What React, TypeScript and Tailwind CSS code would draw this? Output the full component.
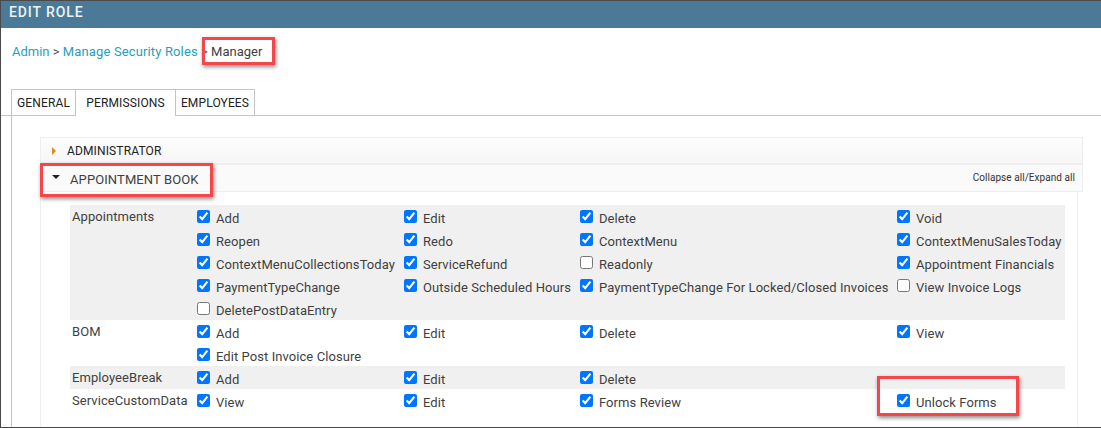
const groups = [
  {
    name: "Appointments",
    shaded: true,
    rows: [
      [["Add", true], ["Edit", true], ["Delete", true], ["Void", true]],
      [["Reopen", true], ["Redo", true], ["ContextMenu", true], ["ContextMenuSalesToday", true]],
      [["ContextMenuCollectionsToday", true], ["ServiceRefund", true], ["Readonly", false], ["Appointment Financials", true]],
      [["PaymentTypeChange", true], ["Outside Scheduled Hours", true], ["PaymentTypeChange For Locked/Closed Invoices", true], ["View Invoice Logs", false]],
      [["DeletePostDataEntry", false]],
    ],
  },
  {
    name: "BOM",
    shaded: false,
    rows: [
      [["Add", true], ["Edit", true], ["Delete", true], ["View", true]],
      [["Edit Post Invoice Closure", true]],
    ],
  },
  {
    name: "EmployeeBreak",
    shaded: true,
    rows: [[["Add", true], ["Edit", true], ["Delete", true]]],
  },
  {
    name: "ServiceCustomData",
    shaded: false,
    rows: [[["View", true], ["Edit", true], ["Forms Review", true], ["Unlock Forms", true]]],
  },
] as { name: string; shaded: boolean; rows: [string, boolean][][] }[];

function Permission({ label, checked }: { label: string; checked: boolean }) {
  return (
    <label className="flex items-center h-[23px] whitespace-nowrap">
      <input type="checkbox" defaultChecked={checked} className="m-0 w-[13px] h-[13px] accent-[#0075ff]" />
      <span className="ml-[6px] translate-y-[2px] tracking-[0.07px]">{label}</span>
    </label>
  );
}

export default function App() {
  return (
    <div className="relative w-[1101px] h-[428px] overflow-hidden bg-white border-l border-t border-b border-[#4a4a4a] font-['Roboto',sans-serif] text-[13px] text-[#3f3f3f]">
      {/* Header */}
      <div className="h-[27px] bg-[#4a7a97] pl-[8px] text-[14px] leading-[22px] font-medium tracking-[0.9px] text-[#eef3f6]">EDIT ROLE</div>

      {/* Breadcrumb */}
      <div className="pl-[11px] pt-[16px] h-[61px] leading-[16px]">
        <span className="text-[#2a9dbd]">Admin</span>
        <span className="text-[#555]"> &gt; </span>
        <span className="text-[#2a9dbd] tracking-[0.14px]">Manage Security Roles</span>
        <span className="text-[#555]"> &gt; </span>
        <span>Manager</span>
      </div>

      {/* Tabs */}
      <div className="flex pl-[10px] h-[27px] border-b border-[#c4c4c4] text-[12px] tracking-[0.14px] text-[#222]">
        <div className="w-[64px] h-[27px] border border-[#c4c4c4] border-r-0 flex items-center justify-center">GENERAL</div>
        <div className="w-[101px] h-[27px] border border-[#c4c4c4] border-b-0 bg-white flex items-center justify-center">PERMISSIONS</div>
        <div className="w-[79px] h-[27px] border border-[#c4c4c4] border-l-0 flex items-center justify-center">EMPLOYEES</div>
      </div>

      <div className="ml-[10px] border-l border-[#c4c4c4] pl-[28px] pt-[21px] h-[312px]">
        {/* Sections */}
        <div className="w-[1043px] h-[27px] border border-[#efefef] bg-gradient-to-b from-[#fdfdfd] to-[#f6f6f6] flex items-center pl-[11px] text-[12px] tracking-[0.14px] text-[#222]">
          <span className="w-0 h-0 border-y-[4px] border-y-transparent border-l-[4px] border-l-[#e08a1e]" />
          <span className="ml-[11px]">ADMINISTRATOR</span>
        </div>
        <div className="w-[1043px] h-[28px] border border-[#efefef] bg-[#fafafa] flex items-center pl-[11px]">
          <span className="w-0 h-0 border-x-[4px] border-x-transparent border-t-[4px] border-t-[#222] -translate-y-[1px]" />
          <span className="ml-[10px] tracking-[0.1px] translate-y-[2px]">APPOINTMENT BOOK</span>
          <span className="ml-auto pr-[7px] text-[10px] tracking-[0.05px] text-[#333] -translate-y-[1px]">Collapse all/Expand all</span>
        </div>

        <div className="w-[1038px] h-[239px] border-l border-r border-[#efefef] pl-[29px] pt-[13px]">
          <div className="w-[995px]">
            {groups.map((group) => (
              <div key={group.name} className={`flex ${group.shaded ? "bg-[#f0f0f0]" : "bg-white"}`}>
                <div className="w-[127px] pl-[2px] leading-[23px] tracking-[0.07px] shrink-0">{group.name}</div>
                <div>
                  {group.rows.map((row, i) => (
                    <div key={i} className="grid grid-cols-[207px_176px_317px_150px]">
                      {row.map(([label, checked]) => (
                        <Permission key={label} label={label} checked={checked} />
                      ))}
                    </div>
                  ))}
                </div>
              </div>
            ))}
          </div>
        </div>
      </div>

      {/* Red callouts */}
      <div className="absolute left-[201px] top-[36px] w-[73px] h-[28px] border-[3px] border-[#f5474b] shadow-[1px_2px_4px_rgba(0,0,0,0.45)]" />
      <div className="absolute left-[39px] top-[162px] w-[173px] h-[34px] border-[3px] border-[#f5474b] shadow-[1px_2px_4px_rgba(0,0,0,0.45)]" />
      <div className="absolute left-[876px] top-[375px] w-[142px] h-[40px] border-[3px] border-[#f5474b] shadow-[1px_2px_4px_rgba(0,0,0,0.45)]" />
    </div>
  );
}
